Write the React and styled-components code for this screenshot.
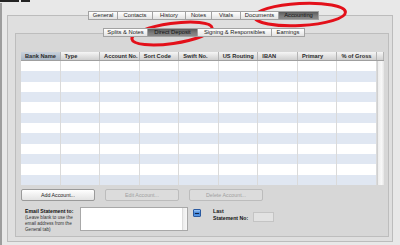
import React from 'react';
import styled, { createGlobalStyle } from 'styled-components';

const Global = createGlobalStyle`
  html, body {
    margin: 0;
    width: 400px;
    height: 245px;
    overflow: hidden;
    background: #e8e8e8;
    font-family: "Liberation Sans", Arial, sans-serif;
    color: #1c1c1c;
  }
`;

const Window = styled.div`
  position: relative;
  width: 400px;
  height: 245px;
  display: flex;
  flex-direction: column;
  background: #e8e8e8;
  overflow: hidden;
`;

const TopStrip = styled.div`
  display: flex;
  gap: 2px;
  height: 2px;
`;

const Blob = styled.div`
  width: ${p => p.$w}px;
  background: #232323;
`;

const Body = styled.div`
  flex: 1;
  margin-top: 1px;
  border-left: 2px solid #9d9d9d;
  padding: 8px 0 0 5px;
  display: flex;
  flex-direction: column;
`;

const TabStrip = styled.div`
  position: relative;
  z-index: 1;
  display: flex;
  height: 9px;
  padding-left: ${p => p.$indent}px;
`;

const Tab = styled.div`
  width: ${p => p.$w}px;
  box-sizing: border-box;
  height: 9px;
  border: 1px solid #a2a2a2;
  border-left: ${p => (p.$first ? '1px solid #a2a2a2' : 'none')};
  background: ${p => (p.$on
    ? 'linear-gradient(#5c5c5c, #7d7d7d 60%, #8a8a8a)'
    : 'linear-gradient(#ffffff, #f1f1f1 50%, #e2e2e2)')};
  color: ${p => (p.$on ? '#111' : '#222')};
  font-size: 5.8px;
  line-height: 7px;
  text-align: center;
  white-space: nowrap;
`;

const OuterPanel = styled.div`
  margin-top: -5px;
  width: 386px;
  height: 227px;
  box-sizing: border-box;
  border: 1px solid #bcbcbc;
  background: #dfdfdf;
  padding: 12px 0 0 7px;
  display: flex;
  flex-direction: column;
`;

const InnerPanel = styled.div`
  margin-top: -4px;
  width: 374px;
  height: 204px;
  box-sizing: border-box;
  border: 1px solid #bdbdbd;
  background: #d7d7d7;
  padding: 18px 0 0 5px;
  display: flex;
  flex-direction: column;
`;

const Table = styled.div`
  width: 363px;
  display: flex;
  flex-direction: column;
`;

const HeaderRow = styled.div`
  display: grid;
  grid-template-columns: repeat(9, 1fr) 7px;
  height: 9px;
  box-sizing: border-box;
  border-bottom: 1px solid #9f9f9f;
`;

const HeadCell = styled.div`
  box-sizing: border-box;
  border-right: 1px solid #b4b4b4;
  background: ${p => (p.$active
    ? 'linear-gradient(#c8d1dc, #a9b6c5)'
    : 'linear-gradient(#f6f6f6, #e2e2e2 50%, #cfcfcf)')};
  font-size: 5.7px;
  font-weight: bold;
  line-height: 8px;
  padding-left: 4px;
  color: #2a2a2a;
  white-space: nowrap;
  overflow: hidden;
`;

const TableBody = styled.div`
  display: flex;
  height: 124px;
`;

const Rows = styled.div`
  flex: 1;
  display: flex;
  flex-direction: column;
`;

const Row = styled.div`
  flex: 1;
  display: grid;
  grid-template-columns: repeat(9, 1fr);
  background: ${p => (p.$alt ? '#e0e7f2' : '#ffffff')};
`;

const Cell = styled.div`
  border-right: 1px solid #dadada;
`;

const ScrollTrack = styled.div`
  width: 7px;
  box-sizing: border-box;
  border-left: 1px solid #d0d0d0;
  background: linear-gradient(to right, #ededed, #f8f8f8 60%, #e4e4e4);
`;

const ButtonRow = styled.div`
  display: flex;
  gap: 10px;
  margin-top: 4px;
`;

const Button = styled.div`
  width: 74px;
  height: 12px;
  box-sizing: border-box;
  border: 1px solid ${p => (p.$disabled ? '#bcbcbc' : '#9a9a9a')};
  border-radius: 2px;
  background: ${p => (p.$disabled
    ? '#dcdcdc'
    : 'linear-gradient(#ffffff, #f0f0f0 50%, #e3e3e3)')};
  color: ${p => (p.$disabled ? '#a0a0a0' : '#222')};
  font-size: 5.3px;
  line-height: 10px;
  text-align: center;
`;

const EmailRow = styled.div`
  display: flex;
  align-items: flex-start;
  margin-top: 6px;
`;

const EmailLabel = styled.div`
  margin-left: 4px;
  width: 55px;
  padding-top: 1px;
`;

const BoldLabel = styled.div`
  font-size: 5.2px;
  font-weight: bold;
  line-height: 7px;
  color: #111;
  white-space: nowrap;
`;

const Hint = styled.div`
  font-size: 4.6px;
  line-height: 6px;
  color: #333;
  white-space: nowrap;
`;

const TextBox = styled.div`
  width: 108px;
  height: 24px;
  box-sizing: border-box;
  border: 1px solid #a8a8a8;
  background: #fff;
  display: flex;
  justify-content: flex-end;
`;

const BoxTrack = styled.div`
  width: 4px;
  background: linear-gradient(to right, #ececec, #f7f7f7);
  border-left: 1px solid #dcdcdc;
`;

const Check = styled.div`
  position: relative;
  margin: 2px 0 0 5px;
  width: 8px;
  height: 8px;
  box-sizing: border-box;
  border: 1px solid #2b5aa0;
  border-radius: 1px;
  background: linear-gradient(#9cc8f7, #3c7fd6 55%, #5a9ae6);
  display: flex;
  align-items: center;
  justify-content: center;
`;

const Dash = styled.div`
  width: 4px;
  height: 1px;
  background: #10264a;
`;

const LastLabel = styled.div`
  margin-left: 12px;
  width: 40px;
  padding-top: 1px;
`;

const NumberBox = styled.div`
  margin-top: 5px;
  width: 21px;
  height: 10px;
  box-sizing: border-box;
  border: 1px solid #c4c4c4;
  background: #e2e2e2;
`;

const Marks = styled.svg`
  position: absolute;
  left: 0;
  top: 0;
  pointer-events: none;
`;

const mainTabs = [
  ['General', 30], ['Contacts', 35], ['History', 33], ['Notes', 26],
  ['Vitals', 29], ['Documents', 38], ['Accounting', 40],
];

const subTabs = [
  ['Splits & Notes', 45], ['Direct Deposit', 50],
  ['Signing & Responsibles', 74], ['Earnings', 33],
];

const columns = ['Bank Name', 'Type', 'Account No.', 'Sort Code', 'Swift No.',
  'US Routing', 'IBAN', 'Primary', '% of Gross'];

const rows = Array.from({ length: 12 }, (_, i) => i);

export default function App() {
  return (
    <Window>
      <Global />
      <TopStrip>
        <Blob $w={19} />
        <Blob $w={9} />
      </TopStrip>
      <Body>
        <TabStrip $indent={81}>
          {mainTabs.map(([name, w], i) => (
            <Tab key={name} $w={w} $first={i === 0} $on={name === 'Accounting'}>{name}</Tab>
          ))}
        </TabStrip>
        <OuterPanel>
          <TabStrip $indent={88}>
            {subTabs.map(([name, w], i) => (
              <Tab key={name} $w={w} $first={i === 0} $on={name === 'Direct Deposit'}>{name}</Tab>
            ))}
          </TabStrip>
          <InnerPanel>
            <Table>
              <HeaderRow>
                {columns.map((c, i) => <HeadCell key={c} $active={i === 0}>{c}</HeadCell>)}
                <HeadCell />
              </HeaderRow>
              <TableBody>
                <Rows>
                  {rows.map(r => (
                    <Row key={r} $alt={r % 2 === 1}>
                      {columns.map(c => <Cell key={c} />)}
                    </Row>
                  ))}
                </Rows>
                <ScrollTrack />
              </TableBody>
            </Table>
            <ButtonRow>
              <Button>Add Account...</Button>
              <Button $disabled>Edit Account...</Button>
              <Button $disabled>Delete Account...</Button>
            </ButtonRow>
            <EmailRow>
              <EmailLabel>
                <BoldLabel>Email Statement to:</BoldLabel>
                <Hint>(Leave blank to use the</Hint>
                <Hint>email address from the</Hint>
                <Hint>General tab)</Hint>
              </EmailLabel>
              <TextBox><BoxTrack /></TextBox>
              <Check><Dash /></Check>
              <LastLabel>
                <BoldLabel>Last</BoldLabel>
                <BoldLabel>Statement No:</BoldLabel>
              </LastLabel>
              <NumberBox />
            </EmailRow>
          </InnerPanel>
        </OuterPanel>
      </Body>
      <Marks width="400" height="245" viewBox="0 0 400 245">
        <ellipse cx="300" cy="14.5" rx="45.5" ry="11" fill="none" stroke="#e3101a" strokeWidth="3"
          transform="rotate(-3 300 14.5)" />
        <ellipse cx="172" cy="33.5" rx="40.5" ry="10" fill="none" stroke="#e3101a" strokeWidth="3"
          transform="rotate(-8 172 33.5)" />
      </Marks>
    </Window>
  );
}
